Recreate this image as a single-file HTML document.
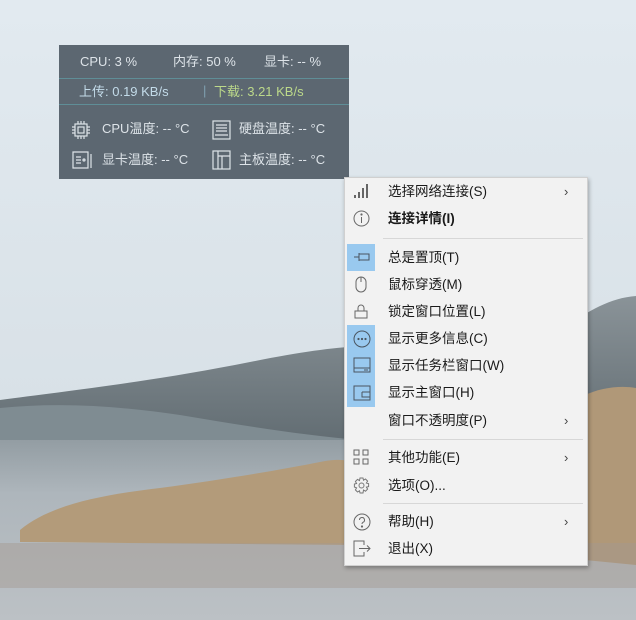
<!DOCTYPE html>
<html><head><meta charset="utf-8"><style>
*{margin:0;padding:0;box-sizing:border-box}
body{width:636px;height:620px;overflow:hidden;position:relative;font-family:"Liberation Sans","Noto Sans CJK SC",sans-serif;background:#dfe7ed}
#bg{position:absolute;left:0;top:0}
.w{position:absolute;left:59px;top:45px;width:290px;height:134px;background:#5c6771;color:#dde3e8;font-size:13px}
.w div{position:absolute;white-space:nowrap;line-height:16px;height:16px}
.menu{position:absolute;left:344px;top:177px;width:244px;height:389px;background:#f2f2f2;border:1px solid #d0d0d0;box-shadow:1px 2px 4px rgba(0,0,0,.3);font-size:13.5px;color:#1a1a1a}
.it{position:absolute;left:0;width:242px;height:27px;line-height:27px}
.it .t{position:absolute;left:43px}
.it .a{position:absolute;left:219px;color:#444;font-size:13px}
.ic{position:absolute;left:2px;top:0;width:28px;height:27px}
.hl{background:#99c9ef}
.sep{position:absolute;left:38px;width:200px;height:1px;background:#d7d7d7}
svg.i{position:absolute;left:6px;top:5px}
</style></head><body>
<svg id="bg" width="636" height="620">
<defs>
<linearGradient id="sky" x1="0" y1="0" x2="0" y2="1"><stop offset="0" stop-color="#e2eaf0"/><stop offset="1" stop-color="#d3dce2"/></linearGradient>
<linearGradient id="hill" x1="0" y1="0" x2="0" y2="1"><stop offset="0" stop-color="#8a9398"/><stop offset="1" stop-color="#5d686e"/></linearGradient>
<linearGradient id="wat" x1="0" y1="0" x2="0" y2="1"><stop offset="0" stop-color="#939da3"/><stop offset=".3" stop-color="#aeb6bc"/><stop offset="1" stop-color="#bcc1c5"/></linearGradient>
</defs>
<rect width="636" height="620" fill="url(#sky)"/>
<path d="M0 400 C60 392 150 382 250 362 C300 352 330 348 360 346 L560 330 C590 310 610 298 636 296 L636 460 L0 440Z" fill="url(#hill)"/>
<path d="M0 408 C60 402 120 406 180 415 C240 425 300 435 360 440 L360 445 L0 445Z" fill="#7f8c92"/>
<rect x="0" y="440" width="636" height="180" fill="url(#wat)"/>
<path d="M20 530 C50 505 100 495 160 488 C220 480 280 470 320 462 C340 458 350 460 360 465 L360 545 L20 542Z" fill="#b39b7a"/>
<path d="M585 395 C600 388 620 385 636 388 L636 565 L585 560Z" fill="#b09878"/>
<rect x="0" y="543" width="636" height="45" fill="#a39a90" opacity=".45"/>
</svg>

<div class="w">
<div style="left:21px;top:9px">CPU: 3 %</div>
<div style="left:114px;top:9px">内存: 50 %</div>
<div style="left:205px;top:9px">显卡: -- %</div>
<div style="left:0;top:33px;width:290px;height:1px;background:#5f8e97"></div>
<div style="left:20px;top:39px;color:#c3dbe9">上传: 0.19 KB/s</div>
<div style="left:144px;top:38px;color:#7fa0b0">|</div>
<div style="left:155px;top:39px;color:#bcd98a">下载: 3.21 KB/s</div>
<div style="left:0;top:59px;width:290px;height:1px;background:#5f8e97"></div>
<svg style="position:absolute;left:12px;top:75px" width="20" height="20" fill="none" stroke="#dde3e8" stroke-width="1.2"><rect x="4" y="4" width="12" height="12"/><rect x="7" y="7" width="6" height="6"/><path d="M7 1v3M10 1v3M13 1v3M7 16v3M10 16v3M13 16v3M1 7h3M1 10h3M1 13h3M16 7h3M16 10h3M16 13h3"/></svg>
<div style="left:43px;top:76px">CPU温度: -- °C</div>
<svg style="position:absolute;left:153px;top:75px" width="19" height="20" fill="none" stroke="#dde3e8" stroke-width="1.2"><rect x="1" y="1" width="17" height="18"/><path d="M4 5h11M4 8h11M4 11h11M3 15h13"/></svg>
<div style="left:180px;top:76px">硬盘温度: -- °C</div>
<svg style="position:absolute;left:13px;top:106px" width="20" height="18" fill="none" stroke="#dde3e8" stroke-width="1.2"><path d="M1 1h15v16H1zM19 3v14"/><path d="M4 6h5M4 9h5M4 12h5"/><circle cx="12" cy="9" r="1"/></svg>
<div style="left:43px;top:107px">显卡温度: -- °C</div>
<svg style="position:absolute;left:153px;top:105px" width="19" height="20" fill="none" stroke="#dde3e8" stroke-width="1.2"><rect x="1" y="1" width="17" height="18"/><path d="M6 1v18M6 6h12M10 6v13"/></svg>
<div style="left:180px;top:107px">主板温度: -- °C</div>
</div>

<div class="menu">
<div class="it" style="top:0"><div class="ic"><svg class="i" width="16" height="16" fill="#666"><rect x="1" y="12" width="2" height="3"/><rect x="5" y="9" width="2" height="6"/><rect x="9" y="5" width="2" height="10"/><rect x="13" y="1" width="2" height="14"/></svg></div><span class="t">选择网络连接(S)</span><span class="a">›</span></div>
<div class="it" style="top:27px"><div class="ic"><svg class="i" width="17" height="17" fill="none" stroke="#666"><circle cx="8.5" cy="8.5" r="7.5"/><path d="M8.5 7v6"/><circle cx="8.5" cy="4.5" r=".6" fill="#666"/></svg></div><span class="t" style="font-weight:bold">连接详情(I)</span></div>
<div class="sep" style="top:60px"></div>
<div class="it" style="top:66px"><div class="ic hl"><svg class="i" width="18" height="16" fill="none" stroke="#4a5560"><path d="M1 8h5M6 4v8M6 5h10v6H6"/></svg></div><span class="t">总是置顶(T)</span></div>
<div class="it" style="top:93px"><div class="ic"><svg class="i" width="16" height="18" fill="none" stroke="#666"><rect x="3" y="1" width="10" height="15" rx="5"/><path d="M8 1v5"/></svg></div><span class="t">鼠标穿透(M)</span></div>
<div class="it" style="top:120px"><div class="ic"><svg class="i" width="16" height="17" fill="none" stroke="#666"><path d="M5 8V5a3 3 0 0 1 6 0v3"/><rect x="2" y="8" width="12" height="7"/></svg></div><span class="t">锁定窗口位置(L)</span></div>
<div class="it" style="top:147px"><div class="ic hl" style="height:82px"><svg class="i" width="18" height="18" fill="none" stroke="#4a5560"><circle cx="9" cy="9" r="8"/><circle cx="5.5" cy="9" r=".6" fill="#4a5560"/><circle cx="9" cy="9" r=".6" fill="#4a5560"/><circle cx="12.5" cy="9" r=".6" fill="#4a5560"/></svg><svg class="i" style="top:32px" width="18" height="16" fill="none" stroke="#4a5560"><rect x="1" y="1" width="16" height="14"/><path d="M1 11h16M11 13h4"/></svg><svg class="i" style="top:60px" width="18" height="16" fill="none" stroke="#4a5560"><rect x="1" y="1" width="16" height="14"/><path d="M9 7h8M9 7v5h8"/></svg></div><span class="t">显示更多信息(C)</span></div>
<div class="it" style="top:174px"><span class="t">显示任务栏窗口(W)</span></div>
<div class="it" style="top:201px"><span class="t">显示主窗口(H)</span></div>
<div class="it" style="top:229px"><span class="t">窗口不透明度(P)</span><span class="a">›</span></div>
<div class="sep" style="top:261px"></div>
<div class="it" style="top:266px"><div class="ic"><svg class="i" width="16" height="16" fill="none" stroke="#666"><rect x="1" y="1" width="5" height="5"/><rect x="10" y="1" width="5" height="5"/><rect x="1" y="10" width="5" height="5"/><rect x="10" y="10" width="5" height="5"/></svg></div><span class="t">其他功能(E)</span><span class="a">›</span></div>
<div class="it" style="top:294px"><div class="ic"><svg class="i" width="17" height="17" fill="none" stroke="#777"><circle cx="8.5" cy="8.5" r="2.5"/><path d="M7 1h3l.5 2.2 2-1.2 2.1 2.1-1.2 2 2.2.5v3l-2.2.5 1.2 2-2.1 2.1-2-1.2L10 16H7l-.5-2.2-2 1.2-2.1-2.1 1.2-2L1.4 10V7l2.2-.5-1.2-2 2.1-2.1 2 1.2z"/></svg></div><span class="t">选项(O)...</span></div>
<div class="sep" style="top:325px"></div>
<div class="it" style="top:330px"><div class="ic"><svg class="i" width="18" height="18" fill="none" stroke="#666"><circle cx="9" cy="9" r="8"/><path d="M6.5 7a2.5 2.5 0 1 1 3.5 2.3c-.8.4-1 .9-1 1.7"/><circle cx="9" cy="13.5" r=".6" fill="#666"/></svg></div><span class="t">帮助(H)</span><span class="a">›</span></div>
<div class="it" style="top:357px"><div class="ic"><svg class="i" width="18" height="17" fill="none" stroke="#666"><path d="M11 5V1H1v15h10v-4M6 8.5h11M14 5.5l3 3-3 3"/></svg></div><span class="t">退出(X)</span></div>
</div>
</body></html>
